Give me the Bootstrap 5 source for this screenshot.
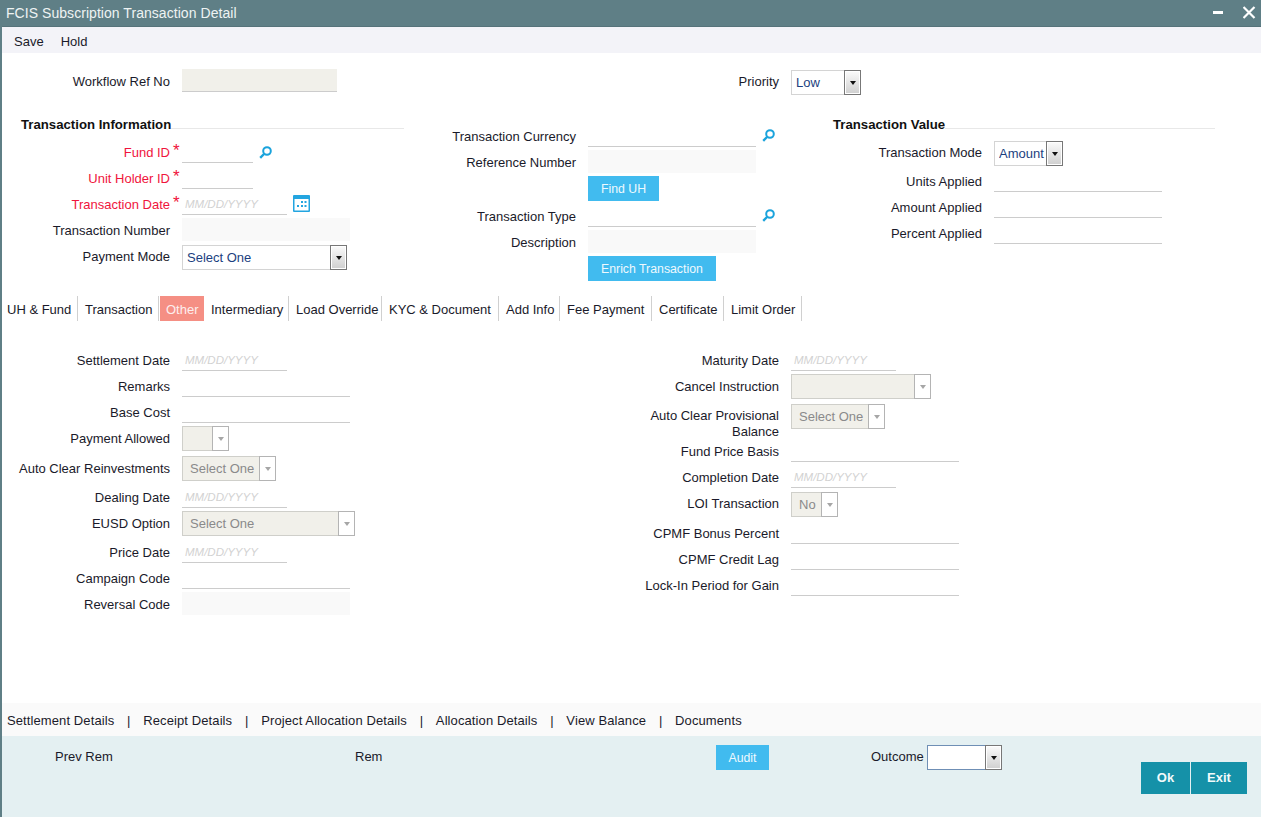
<!doctype html>
<html lang="en"><head><meta charset="utf-8"><title>FCIS Subscription Transaction Detail</title>
<link rel="stylesheet" href="https://cdn.jsdelivr.net/npm/bootstrap@5.3.0/dist/css/bootstrap.min.css">
<style>
html,body{height:817px;overflow:hidden}
body{font-family:"Liberation Sans",Arial,sans-serif;font-size:13px;color:#1a1a2a;background:#fff;border-left:2px solid #5f7f86;display:flex;flex-direction:column}
.titlebar{height:27px;margin-left:-2px;background:#5f7f86;color:#eef3f3;padding:0 0 0 6px;line-height:27px;border-bottom:1px solid #56737a;font-size:14px;letter-spacing:.05px}
.winbtn{width:14px;height:14px;display:block}
.toolbar{height:26px;background:#f3f3f8;line-height:30px;padding-left:12px}
.toolbar a{color:#1a1a2a;text-decoration:none;margin-right:17px}
.mainarea{height:650px;padding-top:15px}
.frow{display:flex;align-items:flex-start;height:26px}
.r28{height:28px}.r29{height:29px}.r30{height:30px}.r36{height:36px}
.flabel{flex:none;text-align:right;line-height:26px;padding-top:1px;margin-right:12px;position:relative;white-space:nowrap}
.lbl-a{width:168px}.lbl-b{width:136px}.lbl-c{width:149px}.lbl-d{width:135px}.lbl-p{width:339px}
.flabel.wrapl{white-space:normal;line-height:16px;padding-top:6px}
.req{color:#f0143c}
.star{position:absolute;left:100%;top:-1px;margin-left:3px;color:#f0143c;font-size:17px}
.form-control.fld{flex:none;height:24px;padding:2px 3px 0;border:0;border-bottom:1px solid #ccc;border-radius:0;background:transparent;font-size:11.5px;color:#333;box-shadow:none}
.form-control.fld::placeholder{color:#d2d2d2;font-style:italic;opacity:1}
.form-control.ro{height:23px;margin-top:1px;border:0;background:#f9f9f9}
.form-control.wf{background:#f1f0ea;border-bottom:1px solid #ccc}
.w72{width:71px!important}.w105{width:105px!important}.w155{width:155px!important}.w168{width:168px!important}
.selbox{flex:none;display:flex;height:25px;margin-top:2px}
.mt1x{margin-top:1px}
.form-select.sel{height:25px;padding:0 0 0 4px;border:1px solid #d4d4d4;border-right:0;border-radius:0;background:#fff;color:#1c3f80;font-size:13px;box-shadow:none;flex:1 1 0;min-width:0;opacity:1;appearance:none}
.selbox.dis .form-select.sel{background:#f1f0ea;color:#8a8a8a;border-color:#cfcfca;padding-left:7px}
.sel-arrow{flex:none;width:17px;background:linear-gradient(#fbfbfb,#cfcfcf);border:1px solid #777;box-shadow:inset 0 0 0 1px #fff;display:flex;align-items:center;justify-content:center}
.sel-arrow::before{content:"";border:3.5px solid transparent;border-top:4px solid #111;border-bottom:0}
.selbox.dis .sel-arrow{background:#fff;border-color:#b4b4b4}
.selbox.dis .sel-arrow::before{border-top-color:#a6a6a6}
.w70{width:70px}.w69{width:69px}.w165{width:165px}.w47{width:47px}.w94{width:94px}.w173{width:173px}.w140{width:140px}.w75{width:75px}
.ico{flex:none;margin-left:6px}
.ic-a{margin-top:7px}.ic-b{margin-top:6px}.ic-c{margin-top:4px}
.sections{display:flex;margin-top:23px;height:166px}
.col-one{width:438px}.col-two{width:393px;padding-top:6px}.col-three{width:382px}
.sec-title{display:flex;height:22px;align-items:flex-start}
.sec-title b{line-height:15px;font-size:13.2px;color:#111}
.sec-line{flex:1;height:12px;border-bottom:1px solid #e8e8e8}
.ps19{padding-left:19px;width:402px}
.btn.act{background:#41bbef;border:0;border-radius:0;color:#eef9fe;font-size:12.3px;height:25px;padding:0 13px;margin-top:1px;line-height:26px}
.tabs{margin-top:13px;height:25px;flex-wrap:nowrap}
.tabs .nav-link{height:25px;line-height:27px;padding:0 0 0 7px;color:#1a1a2a;border-right:1px solid #d0d0d0;font-size:13px;white-space:nowrap}
.tabs .nav-item:nth-child(1) .nav-link{width:76px;padding-left:5px}
.tabs .nav-item:nth-child(2) .nav-link{width:81px}
.tabs .nav-item:nth-child(3) .nav-link{width:44px;margin-left:1px;padding-left:6px}
.tabs .nav-item:nth-child(4) .nav-link{width:85px}
.tabs .nav-item:nth-child(5) .nav-link{width:93px}
.tabs .nav-item:nth-child(6) .nav-link{width:117px}
.tabs .nav-item:nth-child(7) .nav-link{width:61px}
.tabs .nav-item:nth-child(8) .nav-link{width:92px}
.tabs .nav-item:nth-child(9) .nav-link{width:72px}
.tabs .nav-item:nth-child(10) .nav-link{width:78px}
.tabs .nav-link.active{background:#f58f84;color:#fdeeee;border-right:0}
.tabpane{display:flex;padding-top:26px}
.pane-l{width:642px}
.bottomnav{height:33px;background:#fafafa;line-height:36px;padding-left:5px}
.bottomnav a{color:#1a1a2a;text-decoration:none;letter-spacing:.1px}
.bottomnav i{font-style:normal;margin:0 12.8px}
.footerbar{flex:1;background:#e4f0f2;display:flex;align-items:flex-start;padding-top:9px}
.footerbar .ftxt{line-height:24px;flex:none}
.btn.act.aud{width:53px;height:25px;padding:0;margin:0}
.selbox.out{margin:0}
.selbox.out .form-select.sel{border:1px solid #6f8fb5;border-right:0;height:25px}
.selbox.out .sel-arrow{height:25px}
.btn.okx{background:#1591a8;border:0;border-radius:0;color:#f2fafb;font-weight:700;font-size:13px;height:32px;padding:0;margin-top:17px;flex:none}
.foot-prev{margin-left:53px;width:300px}.foot-rem{width:361px}.foot-out{margin-left:102px;width:56px}
.foot-ok{width:49px;margin-left:139px}.foot-exit{width:56px;margin-left:1px}
</style></head>
<body>
<div class="titlebar d-flex align-items-center justify-content-between">
  <span>FCIS Subscription Transaction Detail</span>
  <span class="d-flex align-items-center">
    <svg class="winbtn" viewBox="0 0 14 14"><rect x="0" y="5" width="10" height="3" fill="#fff"/></svg>
    <svg class="winbtn ms-3 me-1" viewBox="0 0 14 14"><path d="M0 0 11 11M11 0 0 11" stroke="#fff" stroke-width="2.2" fill="none" transform="translate(.5 1)"/></svg>
  </span>
</div>
<div class="toolbar"><a href="#">Save</a><a href="#">Hold</a></div>

<div class="mainarea">
  <div class="d-flex">
    <div class="frow col-one"><label class="flabel lbl-a">Workflow Ref No</label><input class="form-control fld ro wf w155" disabled></div>
    <div class="frow"><label class="flabel lbl-p">Priority</label><div class="selbox w70"><select class="form-select sel"><option>Low</option></select><span class="sel-arrow"></span></div></div>
  </div>
  <div class="sections">
    <div class="col-one">
      <div class="sec-title ps19"><b>Transaction Information</b><span class="sec-line"></span></div>
      <div class="frow"><label class="flabel lbl-a req">Fund ID<span class="star">*</span></label><input class="form-control fld w72">
        <svg class="ico ic-a" width="13" height="13" viewBox="0 0 13 13"><circle cx="8" cy="5" r="3.8" fill="none" stroke="#1aa3dc" stroke-width="2"/><path d="M5 8 1.2 11.8" stroke="#1aa3dc" stroke-width="2.4"/></svg></div>
      <div class="frow"><label class="flabel lbl-a req">Unit Holder ID<span class="star">*</span></label><input class="form-control fld w72"></div>
      <div class="frow"><label class="flabel lbl-a req">Transaction Date<span class="star">*</span></label><input class="form-control fld w105" placeholder="MM/DD/YYYY">
        <svg class="ico ic-c" width="17" height="17" viewBox="0 0 17 17"><rect width="17" height="17" rx="1" fill="#23a5e0"/><rect x="1.5" y="4" width="14" height="11.5" fill="#fff"/><g fill="#23a5e0"><rect x="8" y="6" width="2" height="2"/><rect x="11.5" y="6" width="2" height="2"/><rect x="4" y="10" width="2" height="2"/><rect x="8" y="10" width="2" height="2"/><rect x="11.5" y="10" width="2" height="2"/></g></svg></div>
      <div class="frow"><label class="flabel lbl-a">Transaction Number</label><input class="form-control fld ro w168" disabled></div>
      <div class="frow"><label class="flabel lbl-a">Payment Mode</label><div class="selbox w165"><select class="form-select sel"><option>Select One</option></select><span class="sel-arrow"></span></div></div>
    </div>
    <div class="col-two">
      <div class="frow"><label class="flabel lbl-b">Transaction Currency</label><input class="form-control fld w168">
        <svg class="ico ic-b" width="13" height="13" viewBox="0 0 13 13"><circle cx="8" cy="5" r="3.8" fill="none" stroke="#1aa3dc" stroke-width="2"/><path d="M5 8 1.2 11.8" stroke="#1aa3dc" stroke-width="2.4"/></svg></div>
      <div class="frow"><label class="flabel lbl-b">Reference Number</label><input class="form-control fld ro w168" disabled></div>
      <div class="frow r28"><span class="flabel lbl-b"></span><button class="btn act" type="button">Find UH</button></div>
      <div class="frow"><label class="flabel lbl-b">Transaction Type</label><input class="form-control fld w168">
        <svg class="ico ic-b" width="13" height="13" viewBox="0 0 13 13"><circle cx="8" cy="5" r="3.8" fill="none" stroke="#1aa3dc" stroke-width="2"/><path d="M5 8 1.2 11.8" stroke="#1aa3dc" stroke-width="2.4"/></svg></div>
      <div class="frow"><label class="flabel lbl-b">Description</label><input class="form-control fld ro w168" disabled></div>
      <div class="frow r28"><span class="flabel lbl-b"></span><button class="btn act" type="button">Enrich Transaction</button></div>
    </div>
    <div class="col-three">
      <div class="sec-title"><b>Transaction Value</b><span class="sec-line"></span></div>
      <div class="frow r29"><label class="flabel lbl-c">Transaction Mode</label><div class="selbox w69"><select class="form-select sel"><option>Amount</option></select><span class="sel-arrow"></span></div></div>
      <div class="frow"><label class="flabel lbl-c">Units Applied</label><input class="form-control fld w168"></div>
      <div class="frow"><label class="flabel lbl-c">Amount Applied</label><input class="form-control fld w168"></div>
      <div class="frow"><label class="flabel lbl-c">Percent Applied</label><input class="form-control fld w168"></div>
    </div>
  </div>

  <ul class="nav tabs">
    <li class="nav-item"><a class="nav-link" href="#">UH &amp; Fund</a></li>
    <li class="nav-item"><a class="nav-link" href="#">Transaction</a></li>
    <li class="nav-item"><a class="nav-link active" href="#">Other</a></li>
    <li class="nav-item"><a class="nav-link" href="#">Intermediary</a></li>
    <li class="nav-item"><a class="nav-link" href="#">Load Override</a></li>
    <li class="nav-item"><a class="nav-link" href="#">KYC &amp; Document</a></li>
    <li class="nav-item"><a class="nav-link" href="#">Add Info</a></li>
    <li class="nav-item"><a class="nav-link" href="#">Fee Payment</a></li>
    <li class="nav-item"><a class="nav-link" href="#">Certificate</a></li>
    <li class="nav-item"><a class="nav-link" href="#">Limit Order</a></li>
  </ul>

  <div class="tabpane">
    <div class="pane-l">
      <div class="frow"><label class="flabel lbl-a">Settlement Date</label><input class="form-control fld w105" placeholder="MM/DD/YYYY"></div>
      <div class="frow"><label class="flabel lbl-a">Remarks</label><input class="form-control fld w168"></div>
      <div class="frow"><label class="flabel lbl-a">Base Cost</label><input class="form-control fld w168"></div>
      <div class="frow r30"><label class="flabel lbl-a">Payment Allowed</label><div class="selbox dis w47 mt1x"><select class="form-select sel" disabled><option></option></select><span class="sel-arrow"></span></div></div>
      <div class="frow r29"><label class="flabel lbl-a">Auto Clear Reinvestments</label><div class="selbox dis w94 mt1x"><select class="form-select sel" disabled><option>Select One</option></select><span class="sel-arrow"></span></div></div>
      <div class="frow"><label class="flabel lbl-a">Dealing Date</label><input class="form-control fld w105" placeholder="MM/DD/YYYY"></div>
      <div class="frow r29"><label class="flabel lbl-a">EUSD Option</label><div class="selbox dis w173 mt1x"><select class="form-select sel" disabled><option>Select One</option></select><span class="sel-arrow"></span></div></div>
      <div class="frow"><label class="flabel lbl-a">Price Date</label><input class="form-control fld w105" placeholder="MM/DD/YYYY"></div>
      <div class="frow"><label class="flabel lbl-a">Campaign Code</label><input class="form-control fld w168"></div>
      <div class="frow"><label class="flabel lbl-a">Reversal Code</label><input class="form-control fld ro w168" disabled></div>
    </div>
    <div>
      <div class="frow"><label class="flabel lbl-d">Maturity Date</label><input class="form-control fld w105" placeholder="MM/DD/YYYY"></div>
      <div class="frow r29"><label class="flabel lbl-d">Cancel Instruction</label><div class="selbox dis w140 mt1x"><select class="form-select sel" disabled><option></option></select><span class="sel-arrow"></span></div></div>
      <div class="frow r36"><label class="flabel lbl-d wrapl">Auto Clear Provisional Balance</label><div class="selbox dis w94"><select class="form-select sel" disabled><option>Select One</option></select><span class="sel-arrow"></span></div></div>
      <div class="frow"><label class="flabel lbl-d">Fund Price Basis</label><input class="form-control fld w168"></div>
      <div class="frow"><label class="flabel lbl-d">Completion Date</label><input class="form-control fld w105" placeholder="MM/DD/YYYY"></div>
      <div class="frow r30"><label class="flabel lbl-d">LOI Transaction</label><div class="selbox dis w47"><select class="form-select sel" disabled><option>No</option></select><span class="sel-arrow"></span></div></div>
      <div class="frow"><label class="flabel lbl-d">CPMF Bonus Percent</label><input class="form-control fld w168"></div>
      <div class="frow"><label class="flabel lbl-d">CPMF Credit Lag</label><input class="form-control fld w168"></div>
      <div class="frow"><label class="flabel lbl-d">Lock-In Period for Gain</label><input class="form-control fld w168"></div>
    </div>
  </div>
</div>

<div class="bottomnav"><a href="#">Settlement Details</a><i>|</i><a href="#">Receipt Details</a><i>|</i><a href="#">Project Allocation Details</a><i>|</i><a href="#">Allocation Details</a><i>|</i><a href="#">View Balance</a><i>|</i><a href="#">Documents</a></div>
<div class="footerbar">
  <span class="ftxt foot-prev">Prev Rem</span>
  <span class="ftxt foot-rem">Rem</span>
  <button class="btn act aud" type="button">Audit</button>
  <span class="ftxt foot-out">Outcome</span>
  <div class="selbox out w75"><select class="form-select sel"><option></option></select><span class="sel-arrow"></span></div>
  <button class="btn okx foot-ok" type="button">Ok</button>
  <button class="btn okx foot-exit" type="button">Exit</button>
</div>
</body></html>
